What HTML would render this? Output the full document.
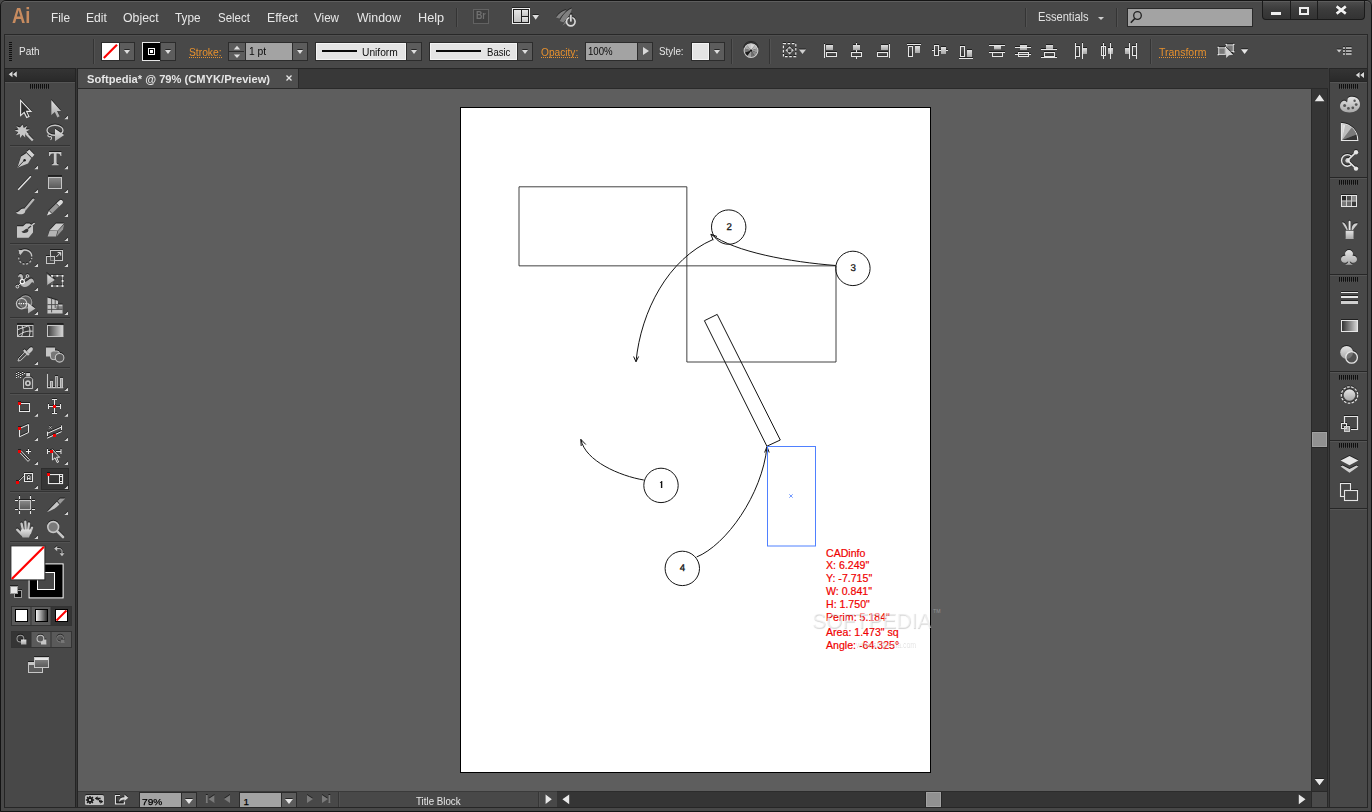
<!DOCTYPE html>
<html><head><meta charset="utf-8"><title>Ai</title>
<style>
*{box-sizing:border-box;margin:0;padding:0}
html,body{width:1372px;height:812px;overflow:hidden;background:#484848;font-family:"Liberation Sans",sans-serif;}
#win{position:absolute;left:0;top:0;width:1372px;height:812px;background:#484848;overflow:hidden}
.a{position:absolute}
.t{position:absolute;white-space:nowrap;line-height:1}
.menu{font-size:12.3px;top:10px;color:#e6e6e6}
.vs{position:absolute;width:2px;border-left:1px solid #343434;border-right:1px solid #525252}
.or{color:#e8912d;font-size:11px;top:46px}
.ul{position:absolute;height:1px;background-image:linear-gradient(90deg,#e8912d 50%,transparent 50%);background-size:2px 1px}
.ctl{font-size:11px;color:#e6e6e6;top:46px}
.dd{position:absolute;background:#5c5c5c;border:1px solid #2c2c2c;width:16px;height:19px;top:42px}
.dd:after{content:"";position:absolute;left:4px;top:7px;border-left:3.5px solid transparent;border-right:3.5px solid transparent;border-top:4.5px solid #dedede;filter:drop-shadow(0px -1px 0px rgba(0,0,0,0.6))}
.box{position:absolute;border:1px solid #2c2c2c;height:19px;top:42px}
.lt{background:#e4e4e4}
.inp{background:#a3a3a3}
.bt{font-size:11px;color:#101010;top:4px}
svg{position:absolute;left:0;top:0;overflow:visible}
.grip{position:absolute;height:5px;width:19px;background-image:linear-gradient(90deg,#0e0e0e 50%,transparent 50%);background-size:2px 5px;border-bottom:1px solid rgba(255,255,255,0.06)}
</style></head><body>
<div id="win">
<div class="a" style="left:0;top:0;width:1372px;height:812px;border:1px solid #141414;border-radius:6px 6px 0 0"></div>
<div class="a" style="left:1px;top:1px;width:1370px;height:12px;border-top:1px solid #5e5e5e;border-radius:5px 5px 0 0"></div>
<!--MENUBAR-->
<div class="t" style="left:12.40px;top:4.77px;font-size:22.6px;color:#c78b5f;font-weight:bold;transform:scaleX(0.8142);transform-origin:0 0;">Ai</div>
<div class="t" style="left:50.70px;top:10.89px;font-size:13px;color:#e8e8e8;transform:scaleX(0.9070);transform-origin:0 0;">File</div><div class="t" style="left:85.90px;top:10.89px;font-size:13px;color:#e8e8e8;transform:scaleX(0.9285);transform-origin:0 0;">Edit</div><div class="t" style="left:122.80px;top:10.89px;font-size:13px;color:#e8e8e8;transform:scaleX(0.9475);transform-origin:0 0;">Object</div><div class="t" style="left:174.90px;top:10.89px;font-size:13px;color:#e8e8e8;transform:scaleX(0.9083);transform-origin:0 0;">Type</div><div class="t" style="left:217.60px;top:10.89px;font-size:13px;color:#e8e8e8;transform:scaleX(0.8829);transform-origin:0 0;">Select</div><div class="t" style="left:266.50px;top:10.89px;font-size:13px;color:#e8e8e8;transform:scaleX(0.9393);transform-origin:0 0;">Effect</div><div class="t" style="left:314.20px;top:10.89px;font-size:13px;color:#e8e8e8;transform:scaleX(0.8946);transform-origin:0 0;">View</div><div class="t" style="left:357.30px;top:10.89px;font-size:13px;color:#e8e8e8;transform:scaleX(0.9473);transform-origin:0 0;">Window</div><div class="t" style="left:417.60px;top:10.89px;font-size:13px;color:#e8e8e8;transform:scaleX(0.9762);transform-origin:0 0;">Help</div>
<div class="vs" style="left:456px;top:8px;height:19px"></div>
<div class="a" style="left:473px;top:9px;width:16px;height:15px;border:1px solid #626262;background:#3f3f3f"></div><div class="t" style="left:476.20px;top:11.46px;font-size:10.2px;color:#707070;font-weight:bold;transform:scaleX(0.8645);transform-origin:0 0;">Br</div>
<svg width="1372" height="40" viewBox="0 0 1372 40" style="filter:drop-shadow(0px -1px 0px rgba(0,0,0,0.5))"><defs><linearGradient id="lg" x1="0" y1="0" x2="0" y2="1"><stop offset="0" stop-color="#e6e6e6"/><stop offset="1" stop-color="#c2c2c2"/></linearGradient></defs><rect x="512.5" y="8.5" width="17" height="15" fill="#1e1e1e" stroke="#ececec"/><rect x="514" y="10" width="7" height="12" fill="url(#lg)"/><rect x="522" y="10" width="6" height="6" fill="url(#lg)"/><rect x="522" y="17" width="6" height="5" fill="url(#lg)"/><path d="M532.4 15h6.6l-3.3 4.8z" fill="#dedede"/><path d="M556 17.6C559 13 563 10.4 566.4 10C565 12.4 561.6 15.6 559.4 18.4Z" fill="#808080"/><path d="M559.8 21C562.4 15 567.6 9.6 572 8.6C571.4 12.6 567.6 18 563.6 22.4Z" fill="#808080"/><path d="M562.4 25.6L565.4 20.4L567.4 22.4Z" fill="#7a7a7a"/><circle cx="570.8" cy="21.6" r="4.3" fill="#484848" stroke="#d8d8d8" stroke-width="1.7"/><rect x="569.3" y="14.2" width="3" height="8" fill="#484848"/><rect x="570" y="14.8" width="1.7" height="6.8" fill="#d8d8d8"/></svg>
<div class="vs" style="left:1025px;top:8px;height:19px"></div>
<div class="t" style="left:1038.00px;top:10.53px;font-size:12.6px;color:#e2e2e2;transform:scaleX(0.8811);transform-origin:0 0;">Essentials</div>
<div class="a" style="left:1098px;top:17px;border-left:3px solid transparent;border-right:3px solid transparent;border-top:3px solid #d0d0d0"></div>
<div class="vs" style="left:1116px;top:8px;height:19px"></div>
<div class="a" style="left:1127px;top:8px;width:126px;height:19px;background:#a3a3a3;border:1px solid #2a2a2a"></div>
<svg width="1372" height="40" viewBox="0 0 1372 40"><circle cx="1137.5" cy="15.5" r="3.8" fill="none" stroke="#222" stroke-width="1.3"/><path d="M1134.8 18.5l-4 4.2" stroke="#222" stroke-width="1.6"/></svg>
<div class="a" style="left:1262px;top:1px;width:103px;height:19px;background:linear-gradient(#4e4e4e,#3c3c3c 45%,#333);border:1px solid #1a1a1a;border-top:none;border-radius:0 0 4px 4px;box-shadow:inset 0 1px 0 #5c5c5c"></div>
<div class="a" style="left:1290px;top:1px;width:1px;height:18px;background:#1c1c1c"></div><div class="a" style="left:1317px;top:1px;width:1px;height:18px;background:#1c1c1c"></div>
<div class="a" style="left:1271px;top:12px;width:10px;height:3px;background:#ededed"></div>
<div class="a" style="left:1299px;top:7px;width:10px;height:8px;border:2px solid #ededed"></div>
<svg width="1372" height="40" viewBox="0 0 1372 40"><path d="M1336.6 6.2l9.2 7.2M1345.8 6.2l-9.2 7.2" stroke="#1a1a1a" stroke-width="4" opacity="0.55"/><path d="M1336.6 6.4l9.2 7.2M1345.8 6.4l-9.2 7.2" stroke="#f2f2f2" stroke-width="2.7"/></svg>
<!--CONTROLBAR-->
<div class="a" style="left:4px;top:34px;width:1364px;height:35px;border:1px solid #282828;border-bottom-color:#262626;background:#484848"></div>
<div class="a" style="left:5px;top:35px;width:1362px;height:1px;background:#505050"></div>
<div class="a" style="left:9px;top:42px;width:3px;height:20px;background-image:linear-gradient(180deg,#101010 50%,transparent 50%);background-size:3px 2px"></div>
<div class="t" style="left:18.50px;top:46.63px;font-size:10px;color:#e6e6e6;transform:scaleX(1.0014);transform-origin:0 0;">Path</div>
<div class="vs" style="left:93px;top:39px;height:25px"></div>
<div class="box" style="left:101px;width:19px;background:#fff"></div><div class="dd" style="left:119px"></div>
<svg width="1372" height="70" viewBox="0 0 1372 70"><path d="M103.8 58L117 44.8" stroke="#f00" stroke-width="2.1"/></svg>
<div class="box" style="left:142px;width:19px;background:#000;border-color:#e8e8e8"></div><div class="dd" style="left:160px"></div>
<div class="a" style="left:148px;top:48px;width:7px;height:7px;border:1px solid #fff;background:#000"></div><div class="a" style="left:150px;top:50px;width:3px;height:3px;background:#fff"></div>
<div class="t" style="left:189.00px;top:47.53px;font-size:10px;color:#e8912d;transform:scaleX(1.0290);transform-origin:0 0;">Stroke:</div><div class="ul" style="left:189px;top:57px;width:33px"></div>
<div class="box" style="left:228px;width:18px;background:#5c5c5c"></div><div class="a" style="left:229px;top:51px;width:15px;height:1px;background:#2c2c2c"></div>
<svg width="1372" height="70" viewBox="0 0 1372 70"><path d="M233.8 49.4L237 45.8L240.2 49.4ZM233.8 54.4L237 58L240.2 54.4Z" fill="#dedede"/></svg>
<div class="box inp" style="left:245px;width:48px"></div><div class="dd" style="left:292px"></div><div class="t" style="left:249.00px;top:46.63px;font-size:10px;color:#0c0c0c;transform:scaleX(1.0312);transform-origin:0 0;">1 pt</div>
<div class="box lt" style="left:315px;width:92px;box-shadow:inset 0 0 0 1px #f4f4f4"><div class="a" style="left:6px;top:7px;width:35px;height:2px;background:#0a0a0a"></div></div><div class="dd" style="left:406px"></div><div class="t" style="left:362.00px;top:48.43px;font-size:10px;color:#0c0c0c;transform:scaleX(1.0227);transform-origin:0 0;">Uniform</div>
<div class="box lt" style="left:429px;width:89px;box-shadow:inset 0 0 0 1px #f4f4f4"><div class="a" style="left:6px;top:7px;width:45px;height:2px;background:#0a0a0a"></div></div><div class="dd" style="left:517px"></div><div class="t" style="left:486.60px;top:48.43px;font-size:10px;color:#0c0c0c;transform:scaleX(0.9569);transform-origin:0 0;">Basic</div>
<div class="t" style="left:540.60px;top:47.53px;font-size:10px;color:#e8912d;transform:scaleX(1.0142);transform-origin:0 0;">Opacity:</div><div class="ul" style="left:541px;top:57px;width:37px"></div>
<div class="box inp" style="left:585px;width:53px"></div><div class="box" style="left:637px;width:16px;background:#5c5c5c"></div><div class="a" style="left:643px;top:47px;border-top:4.5px solid transparent;border-bottom:4.5px solid transparent;border-left:6px solid #dadada"></div><div class="t" style="left:588.20px;top:46.53px;font-size:10px;color:#0c0c0c;transform:scaleX(0.9618);transform-origin:0 0;">100%</div>
<div class="t" style="left:658.80px;top:46.83px;font-size:10px;color:#e6e6e6;transform:scaleX(0.9836);transform-origin:0 0;">Style:</div>
<div class="box lt" style="left:691px;width:19px;box-shadow:inset 0 0 0 1px #f4f4f4"></div><div class="dd" style="left:709px"></div>
<div class="vs" style="left:731px;top:39px;height:25px"></div>
<div class="vs" style="left:769px;top:39px;height:25px"></div>
<div class="vs" style="left:1150px;top:39px;height:25px"></div>
<div class="t" style="left:1158.60px;top:47.53px;font-size:10px;color:#e8912d;transform:scaleX(1.0489);transform-origin:0 0;">Transform</div><div class="ul" style="left:1159px;top:57px;width:47px"></div>
<!--CTRLICONS-->
<svg width="1372" height="812" viewBox="0 0 1372 812" fill="none"><defs><linearGradient id="cg" x1="0" y1="0" x2="0" y2="1"><stop offset="0" stop-color="#e0e0e0"/><stop offset="1" stop-color="#a6a6a6"/></linearGradient><linearGradient id="cd" x1="0" y1="0" x2="0" y2="1"><stop offset="0" stop-color="#5a5a5a"/><stop offset="1" stop-color="#2e2e2e"/></linearGradient><radialGradient id="rg"><stop offset="0" stop-color="#f0f0f0"/><stop offset="0.25" stop-color="#8a8a8a"/><stop offset="1" stop-color="#b8b8b8"/></radialGradient></defs><g style="filter:drop-shadow(0px -1px 0px rgba(0,0,0,0.55))"><path d="M751.0 50.6L751.00 43.70A6.9 6.9 0 0 1 755.06 45.02Z" fill="#d6d6d6"/><path d="M751.0 50.6L755.06 45.02A6.9 6.9 0 0 1 757.56 48.47Z" fill="#b8b8b8"/><path d="M751.0 50.6L757.56 48.47A6.9 6.9 0 0 1 757.56 52.73Z" fill="#9a9a9a"/><path d="M751.0 50.6L757.56 52.73A6.9 6.9 0 0 1 755.06 56.18Z" fill="#8a8a8a"/><path d="M751.0 50.6L755.06 56.18A6.9 6.9 0 0 1 751.00 57.50Z" fill="#6e6e6e"/><path d="M751.0 50.6L751.00 57.50A6.9 6.9 0 0 1 746.94 56.18Z" fill="#9c9c9c"/><path d="M751.0 50.6L746.94 56.18A6.9 6.9 0 0 1 744.44 52.73Z" fill="#1a1a1a"/><path d="M751.0 50.6L744.44 52.73A6.9 6.9 0 0 1 744.44 48.47Z" fill="#7c7c7c"/><path d="M751.0 50.6L744.44 48.47A6.9 6.9 0 0 1 746.94 45.02Z" fill="#a8a8a8"/><path d="M751.0 50.6L746.94 45.02A6.9 6.9 0 0 1 751.00 43.70Z" fill="#c6c6c6"/><circle cx="751.0" cy="50.6" r="6.9" stroke="#cacaca" stroke-width="1.1"/><path d="M743.7 49.1A7.5 7.5 0 0 1 758.3 49.1" stroke="#2a2a2a" stroke-width="0.8" transform="translate(0,-0.9)"/><circle cx="751.0" cy="50.6" r="1.1" fill="#161616"/><rect x="783.4" y="43.6" width="12.4" height="13" stroke="#e6e6e6" stroke-width="1.2" stroke-dasharray="2.6 1.6"/><path d="M789.6 46.2l2.2 2.4h-4.4zM789.6 54.6l2.2-2.4h-4.4zM785.4 50.3l2.4-2.2v4.4zM793.8 50.3l-2.4-2.2v4.4z" fill="#cfcfcf"/><path d="M799 49.6h7l-3.5 4.4z" fill="#cfcfcf"/><rect x="824" y="44" width="1" height="14" fill="#e6e6e6"/><rect x="826" y="45" width="7" height="5" fill="url(#cg)"/><rect x="826.5" y="52.5" width="10" height="4" fill="url(#cd)" stroke="#e6e6e6" stroke-width="1"/><rect x="856" y="43" width="1" height="16" fill="#e6e6e6"/><rect x="853" y="45" width="7" height="5" fill="url(#cg)"/><rect x="851.5" y="52.5" width="10" height="4" fill="url(#cd)" stroke="#e6e6e6" stroke-width="1"/><rect x="889" y="44" width="1" height="14" fill="#e6e6e6"/><rect x="881" y="45" width="7" height="5" fill="url(#cg)"/><rect x="877.5" y="52.5" width="10" height="4" fill="url(#cd)" stroke="#e6e6e6" stroke-width="1"/><rect x="907" y="44" width="14" height="1" fill="#e6e6e6"/><rect x="908.5" y="46.5" width="4" height="10" fill="url(#cd)" stroke="#e6e6e6" stroke-width="1"/><rect x="915" y="46" width="5" height="7" fill="url(#cg)"/><rect x="932" y="50" width="16" height="1" fill="#e6e6e6"/><rect x="934.5" y="45.5" width="4" height="10" fill="url(#cd)" stroke="#e6e6e6" stroke-width="1"/><rect x="941" y="47" width="5" height="7" fill="url(#cg)"/><rect x="960.5" y="46.5" width="4" height="10" fill="url(#cd)" stroke="#e6e6e6" stroke-width="1"/><rect x="967" y="50" width="5" height="7" fill="url(#cg)"/><rect x="959" y="58" width="14" height="1" fill="#e6e6e6"/><rect x="989" y="45" width="16" height="1" fill="#e6e6e6"/><rect x="989" y="52" width="16" height="1" fill="#e6e6e6"/><rect x="994" y="46" width="7" height="3.4" fill="url(#cg)"/><rect x="992.5" y="52.5" width="10" height="4" fill="url(#cd)" stroke="#e6e6e6" stroke-width="1"/><rect x="1020" y="45" width="7" height="5" fill="url(#cg)"/><rect x="1018.5" y="52.5" width="10" height="4" fill="url(#cd)" stroke="#e6e6e6" stroke-width="1"/><rect x="1015" y="47" width="16" height="1" fill="#e6e6e6"/><rect x="1015" y="54" width="16" height="1" fill="#e6e6e6"/><rect x="1046" y="45" width="7" height="4" fill="url(#cg)"/><rect x="1044.5" y="52.5" width="10" height="4" fill="url(#cd)" stroke="#e6e6e6" stroke-width="1"/><rect x="1041" y="49" width="16" height="1" fill="#e6e6e6"/><rect x="1041" y="57" width="16" height="1" fill="#e6e6e6"/><rect x="1075" y="43" width="1" height="16" fill="#e6e6e6"/><rect x="1082" y="43" width="1" height="16" fill="#e6e6e6"/><rect x="1075.5" y="46.5" width="4" height="10" fill="url(#cd)" stroke="#e6e6e6" stroke-width="1"/><rect x="1083" y="48" width="4" height="6" fill="url(#cg)"/><rect x="1101.5" y="46.5" width="4" height="9" fill="url(#cd)" stroke="#e6e6e6" stroke-width="1"/><rect x="1108" y="48" width="5" height="6" fill="url(#cg)"/><rect x="1103" y="43" width="1" height="16" fill="#e6e6e6"/><rect x="1110" y="43" width="1" height="16" fill="#e6e6e6"/><rect x="1125" y="48" width="5" height="6" fill="url(#cg)"/><rect x="1132.5" y="46.5" width="4" height="9" fill="url(#cd)" stroke="#e6e6e6" stroke-width="1"/><rect x="1129" y="43" width="1" height="16" fill="#e6e6e6"/><rect x="1136" y="43" width="1" height="16" fill="#e6e6e6"/><rect x="1218.7" y="47.8" width="6.6" height="6.6" fill="#7a7a7a" stroke="#cfcfcf" stroke-width="1.1"/><rect x="1226.7" y="44.9" width="6.6" height="6.6" fill="#7a7a7a" stroke="#cfcfcf" stroke-width="1.1"/><rect x="1217.6000000000001" y="46.699999999999996" width="1.2" height="1.2" fill="#fff"/><rect x="1225.0" y="46.699999999999996" width="1.2" height="1.2" fill="#fff"/><rect x="1217.6000000000001" y="54.1" width="1.2" height="1.2" fill="#fff"/><rect x="1225.6000000000001" y="43.8" width="1.2" height="1.2" fill="#fff"/><rect x="1233.2" y="43.8" width="1.2" height="1.2" fill="#fff"/><rect x="1233.2" y="51.199999999999996" width="1.2" height="1.2" fill="#fff"/><path d="M1225.8 47.2L1226.2 58L1229 55.2L1233.2 54.8Z" fill="#d2d2d2"/><path d="M1225.8 46.6L1233.4 54" stroke="#1c1c1c" stroke-width="0.9"/><path d="M1241 49.2h7.2l-3.6 4.9z" fill="#e6e6e6"/><path d="M1336.6 49.4h5l-2.5 3z" fill="#cfcfcf"/><path d="M1343 48h2M1346 48h5.6M1343 51h2M1346 51h5.6M1343 54h2M1346 54h5.6" stroke="#cfcfcf" stroke-width="1.4"/></g></svg>
<!--TOOLS-->
<div class="a" style="left:4px;top:68px;width:72px;height:740px;background:#484848;border:1px solid #242424"></div><div class="a" style="left:76px;top:68px;width:1px;height:740px;background:#363636"></div>
<div class="a" style="left:5px;top:69px;width:70px;height:12px;background:linear-gradient(#343434,#2a2a2a)"></div>
<div class="a" style="left:5px;top:81px;width:70px;height:1px;background:#262626"></div><div class="a" style="left:5px;top:82px;width:70px;height:1px;background:#565656"></div>

<div class="grip" style="left:30px;top:84px"></div>
<!--TOOLICONS-->
<svg width="1372" height="812" viewBox="0 0 1372 812" fill="none"><defs><linearGradient id="gv" x1="0" y1="0" x2="0" y2="1"><stop offset="0" stop-color="#8a8a8a"/><stop offset="1" stop-color="#585858"/></linearGradient><linearGradient id="gh" x1="0" y1="0" x2="1" y2="0"><stop offset="0" stop-color="#3c3c3c"/><stop offset="1" stop-color="#dadada"/></linearGradient><linearGradient id="gl" x1="0" y1="0" x2="0" y2="1"><stop offset="0" stop-color="#e2e2e2"/><stop offset="1" stop-color="#a8a8a8"/></linearGradient></defs><rect x="10" y="145" width="60" height="1" fill="#333"/><rect x="10" y="146" width="60" height="1" fill="#525252"/><rect x="10" y="243" width="60" height="1" fill="#333"/><rect x="10" y="244" width="60" height="1" fill="#525252"/><rect x="10" y="317" width="60" height="1" fill="#333"/><rect x="10" y="318" width="60" height="1" fill="#525252"/><rect x="10" y="367" width="60" height="1" fill="#333"/><rect x="10" y="368" width="60" height="1" fill="#525252"/><rect x="10" y="393" width="60" height="1" fill="#333"/><rect x="10" y="394" width="60" height="1" fill="#525252"/><rect x="41.5" y="468.5" width="27" height="21" fill="#363636" stroke="#2c2c2c"/><rect x="10" y="491" width="60" height="1" fill="#333"/><rect x="10" y="492" width="60" height="1" fill="#525252"/><rect x="10" y="541" width="60" height="1" fill="#333"/><rect x="10" y="542" width="60" height="1" fill="#525252"/><rect x="29.1" y="563.9" width="34" height="34" fill="#000" stroke="#fff"/><rect x="37.5" y="572.5" width="17" height="17" fill="#484848" stroke="#fff"/><rect x="10.9" y="545.9" width="34" height="34" fill="#fff" stroke="#2a2a2a"/><path d="M11.8 579L44 546.8" stroke="#f00" stroke-width="2.2"/><rect x="11.5" y="606.5" width="60" height="19" fill="#5a5a5a" stroke="#333"/><rect x="51" y="607" width="20" height="18" fill="#353535"/><path d="M31 607V625M51 607V625" stroke="#333"/><rect x="15.5" y="609.5" width="12" height="12" fill="#fff" stroke="#000"/><rect x="35.5" y="609.5" width="12" height="12" fill="url(#gw)" stroke="#000"/><rect x="55.5" y="609.5" width="12" height="12" fill="#fff" stroke="#000"/><path d="M56.5 620.5L66.5 610.5" stroke="#f00" stroke-width="2"/><defs><linearGradient id="gw" x1="0" y1="0" x2="1" y2="0"><stop offset="0" stop-color="#fff"/><stop offset="1" stop-color="#222"/></linearGradient></defs><rect x="11.5" y="631.5" width="60" height="16" fill="#5a5a5a" stroke="#333"/><rect x="12" y="632" width="19" height="15" fill="#353535"/><path d="M31 632V647M51 632V647" stroke="#333"/><g style="filter:drop-shadow(0px -1px 0px rgba(0,0,0,0.55))"><path d="M12.5 71.2v6l-3.8-3zM16.8 71.2v6l-3.8-3z" fill="#d8d8d8"/><path d="M20.6 100.3V115.6L24.2 112.4L26.7 117.6L29 116.5L26.6 111.4H31Z" fill="#2e2e2e" stroke="#e8e8e8" stroke-width="1.1" stroke-linejoin="miter"/><path d="M51.3 100V115L54.8 111.9L57.4 117.4L59.6 116.3L57.1 111H61Z" fill="url(#gl)"/><path d="M68 115.60000000000001V119.2H64.4Z" fill="#d6d6d6"/><path d="M22.5 124.5l1.3 3.6 3.2-2.4-1.2 3.6 4 .2-3.4 2 2.6 2.8-3.9-.6.1 3.9-2.7-2.9-2.4 3.2-.3-3.9-3.8 1.2 2.3-3.2-3.6-1.4 3.8-1-2.2-3.3 3.7 1.2z" fill="#c6c6c6"/><path d="M26 133.5l6.8 7" stroke="#c6c6c6" stroke-width="2.2"/><ellipse cx="55" cy="130.3" rx="8" ry="5" stroke="#c6c6c6" stroke-width="1.4"/><path d="M48.5 134.5c-1.5 1.2 0 2.6 1.6 2.2c1.6-.4 2 1.6.4 3.2" stroke="#c6c6c6" stroke-width="1.2"/><path d="M55 128.7V141.2L64.2 135Z" fill="url(#gl)"/><g transform="translate(0,0.9)"><path d="M17.3 166.8L21 155.5L26.5 152.2L31.3 157L28 162.7Z" fill="#c6c6c6"/><path d="M17.6 166.4L24.3 159.6" stroke="#2e2e2e" stroke-width="0.9"/><circle cx="24.6" cy="159.4" r="1.2" fill="#1e1e1e"/><path d="M26.4 151.2L29.4 148.6L34.4 153.8L32 156.6Z" fill="#d2d2d2"/><path d="M27.4 152.6L31 156.2" stroke="#484848" stroke-width="0.9"/></g><path d="M38 165.6V169.2H34.4Z" fill="#d6d6d6"/><path d="M49 152H61.4V156H60.5C60.3 154.3 59.5 153.4 57.9 153.4H56.6V162.6C56.6 163.8 57.2 164.3 58.6 164.4V165.3H51.8V164.4C53.2 164.3 53.8 163.8 53.8 162.6V153.4H52.5C50.9 153.4 50.1 154.3 49.9 156H49Z" fill="#c6c6c6"/><path d="M68 165.6V169.2H64.4Z" fill="#d6d6d6"/><path d="M18.2 189.7L30.8 176.3" stroke="#e8e8e8" stroke-width="1.3"/><path d="M38 189.4V193H34.4Z" fill="#d6d6d6"/><rect x="48" y="176" width="14" height="1" fill="#2a2a2a"/><rect x="48.5" y="177.5" width="13" height="11" fill="url(#gv)" stroke="#c6c6c6"/><path d="M68 189.4V193H64.4Z" fill="#d6d6d6"/><path d="M33.4 199.6L25 209.6" stroke="#b6b6b6" stroke-width="2.3" stroke-linecap="round"/><path d="M15.8 212.4C19.4 212.2 20.2 208.2 23.6 208.4C26 209.2 25.8 212.6 23.4 213.8C20.6 215 17.4 214 15.8 212.4Z" fill="#c6c6c6"/><g transform="translate(46.9,215.4) rotate(-44)"><path d="M0 0L5 -2.1V2.1Z" fill="#dcdcdc"/><rect x="5" y="-2.1" width="10" height="4.2" fill="#989898"/><path d="M15 -2.1H19.4A2.1 2.1 0 0 1 19.4 2.1H15Z" fill="#d8d8d8"/><path d="M5 -2.1V2.1M15 -2.1V2.1" stroke="#3a3a3a" stroke-width="0.7"/></g><path d="M68 213.4V217H64.4Z" fill="#d6d6d6"/><path d="M17 226.3H23L26 223.5H29.5L33 226V232.5L28.6 237.8H17Z" fill="#c6c6c6"/><path d="M21.5 231.5C24 231.5 25 228.8 27.6 228.5C29 229.4 28.6 231.6 26.8 232.6C24.6 233.6 22.6 233 21.5 231.5Z" fill="#3a3a3a"/><path d="M28 228.6L34.6 223" stroke="#c6c6c6" stroke-width="1.6"/><path d="M28 228.6L31 226" stroke="#3a3a3a" stroke-width="1.3"/><path d="M49.6 230.2L56 223.6H64L57.8 230.4Z" fill="#cdcdcd"/><path d="M49.6 230.6H57.6L56 236.6H47.6Z" fill="#b4b4b4"/><path d="M58.2 230.6L64.2 224.2L63 229.6L56.6 236.6Z" fill="#959595"/><path d="M68 237.4V241H64.4Z" fill="#d6d6d6"/><path d="M19.4 253.6A6.5 6.5 0 0 1 31.7 256.6" stroke="#c6c6c6" stroke-width="1.4"/><path d="M18.7 257.4A6.5 6.5 0 0 0 31.7 257.8" stroke="#b4b4b4" stroke-width="1.3" stroke-dasharray="2.1 1.6"/><path d="M18.4 249.8L24 250.6L20.2 255.2Z" fill="#c6c6c6"/><path d="M38 263.4V267H34.4Z" fill="#d6d6d6"/><rect x="50.5" y="250.5" width="12" height="10" fill="#3e3e3e" stroke="#c6c6c6"/><rect x="46.5" y="256.5" width="8" height="7" fill="#5a5a5a" fill-opacity="0.6" stroke="#c6c6c6"/><path d="M56.3 257L60.3 253M57.6 252.6H60.7V255.7" stroke="#e8e8e8" stroke-width="1"/><path d="M68 263.4V267H64.4Z" fill="#d6d6d6"/><path d="M18 277.6C18 274.6 20.4 273.2 22 274.6C23.8 276.2 22.6 279.6 23.6 281.2C24.8 283 27 280.8 29.2 279.2C31.8 277.6 34.2 279.4 34.2 283.8C33.2 281.8 31.8 282 30.6 283.8C28.2 287.4 23.4 288 21 285.2C18.8 282.6 21.4 278.6 20.4 277.2C19.6 276.4 18.6 276.6 18 277.6Z" fill="#b8b8b8"/><path d="M17.6 286.4L27.4 276.2" stroke="#e8e8e8" stroke-width="1"/><circle cx="17.4" cy="286.6" r="1.4" fill="#484848" stroke="#e8e8e8" stroke-width="0.9"/><circle cx="27.5" cy="276" r="1.4" fill="#484848" stroke="#e8e8e8" stroke-width="0.9"/><circle cx="22.3" cy="281.6" r="2.1" fill="#484848" stroke="#fff" stroke-width="1.1"/><path d="M38 287.4V291H34.4Z" fill="#d6d6d6"/><rect x="52" y="275.8" width="10.6" height="10.2" stroke="#b0b0b0" stroke-width="0.8"/><rect x="51.1" y="274.90000000000003" width="1.8" height="1.8" fill="#f2f2f2"/><rect x="51.1" y="280.0" width="1.8" height="1.8" fill="#f2f2f2"/><rect x="51.1" y="285.1" width="1.8" height="1.8" fill="#f2f2f2"/><rect x="56.4" y="274.90000000000003" width="1.8" height="1.8" fill="#f2f2f2"/><rect x="56.4" y="285.1" width="1.8" height="1.8" fill="#f2f2f2"/><rect x="61.7" y="274.90000000000003" width="1.8" height="1.8" fill="#f2f2f2"/><rect x="61.7" y="280.0" width="1.8" height="1.8" fill="#f2f2f2"/><rect x="61.7" y="285.1" width="1.8" height="1.8" fill="#f2f2f2"/><path d="M46.8 273.6V285.8L55.4 280Z" fill="url(#gl)" stroke="#484848" stroke-width="0.8"/><circle cx="25.6" cy="302" r="6.2" fill="#5c5c5c" stroke="#9a9a9a" stroke-width="1.2"/><circle cx="21.6" cy="303.6" r="5.2" fill="#6a6a6a" fill-opacity="0.5" stroke="#c6c6c6" stroke-width="1.2"/><path d="M18.4 303.6H28" stroke="#fff" stroke-width="1.2" stroke-dasharray="1.2 1.1"/><path d="M28 303V313.4L35.4 308.6Z" fill="url(#gl)"/><path d="M38 311.4V315H34.4Z" fill="#d6d6d6"/><path d="M47.4 297.4L58 300.8V304.6H62.6V313.4H47.4Z" fill="#c6c6c6"/><path d="M47.4 304.6H58M51.6 298.6V312.4M55.2 299.8V308M47.4 309.4H62.6M58 304.6V309.4" stroke="#4a4a4a" stroke-width="0.9"/><path d="M56.2 306.2h6.4v3.2H56.2z" fill="#4a4a4a" opacity="0.55"/><path d="M68 311.4V315H64.4Z" fill="#d6d6d6"/><rect x="17" y="324" width="16.5" height="1" fill="#2a2a2a"/><rect x="17.5" y="325.5" width="15.5" height="11" fill="#3a3a3a" stroke="#c6c6c6"/><path d="M18 335.6C22.5 332.6 26 330.6 32.6 331.2M21.6 336.4C23.4 332 23.6 328.6 22 325.8M18 329.6C22 327.8 25 327.2 28.2 325.8M28.6 325.8C30.6 329.4 30.2 333 29.2 336.4" stroke="#e8e8e8" stroke-width="0.9"/><rect x="47" y="324" width="16.5" height="1" fill="#2a2a2a"/><rect x="47.5" y="325.5" width="15.5" height="11" fill="url(#gh)" stroke="#c6c6c6"/><path d="M18 361L18.7 358.5L25 351.7L27.3 354L20.6 360.5Z" fill="#4a4a4a" stroke="#c6c6c6" stroke-width="1"/><path d="M23.8 350L28.8 355" stroke="#c6c6c6" stroke-width="2.3"/><path d="M26.6 351L29 348.4C30 347.2 31.8 346.9 32.5 347.7C33.3 348.5 32.8 350.2 31.8 351.2L29.2 353.8Z" fill="#c6c6c6"/><path d="M38 361.4V365H34.4Z" fill="#d6d6d6"/><rect x="46" y="347.5" width="9" height="9" fill="#c6c6c6"/><rect x="50.5" y="351" width="9" height="8.6" rx="2.6" fill="#777" stroke="#c6c6c6" stroke-width="1"/><circle cx="59.6" cy="357.8" r="4.3" fill="#5a5a5a" stroke="#c6c6c6" stroke-width="1.1"/><path d="M23.5 379.2L25 377.3H31L32.6 379.2V388.5H23.5Z" fill="#4c4c4c" stroke="#c6c6c6" stroke-width="1"/><rect x="25.4" y="380.4" width="5.2" height="6.8" fill="#3c3c3c"/><rect x="26.2" y="373" width="3.8" height="3.4" fill="#c6c6c6"/><circle cx="27.9" cy="383.3" r="2.1" fill="none" stroke="#c6c6c6" stroke-width="1.7"/><path d="M18 372h1.1v1.1h-1.1zM22 372h1.1v1.1h-1.1zM16 373h1.1v1.1h-1.1zM20 373h1.1v1.1h-1.1zM24 373h1.1v1.1h-1.1zM18 374h1.1v1.1h-1.1zM22 374h1.1v1.1h-1.1zM16 375h1.1v1.1h-1.1zM20 375h1.1v1.1h-1.1zM18 376.2h1.1v1.1h-1.1zM16 377h1.1v1.1h-1.1zM20 377h1.1v1.1h-1.1z" fill="#e4e4e4"/><path d="M38 387.4V391H34.4Z" fill="#d6d6d6"/><path d="M47.5 373.8V387.6H63.2" stroke="#c6c6c6" stroke-width="1.1"/><rect x="50" y="380.8" width="3" height="6.6" fill="#c6c6c6"/><rect x="51" y="381.8" width="1" height="5.6" fill="#8c8c8c"/><rect x="55" y="376" width="3" height="11.4" fill="#b0b0b0"/><rect x="56" y="377" width="1" height="10.4" fill="#7a7a7a"/><rect x="60" y="377.9" width="3" height="9.5" fill="#c6c6c6"/><rect x="61" y="378.9" width="1" height="8.5" fill="#9a9a9a"/><path d="M68 387.4V391H64.4Z" fill="#d6d6d6"/><rect x="19.5" y="403.5" width="10" height="8" stroke="#e8e8e8" stroke-width="1"/><rect x="18" y="402" width="3" height="3" fill="#f40000"/><path d="M38 413.2V416.8H34.4Z" fill="#d6d6d6"/><path d="M54.5 399.5V413.5M52 399.5H57M52 413.5H57M48.5 406.5H60.5M48.5 404V409M60.5 404V409" stroke="#e8e8e8" stroke-width="1"/><rect x="53" y="405" width="3" height="3" fill="#f40000"/><path d="M68 413.2V416.8H64.4Z" fill="#d6d6d6"/><path d="M19.5 428.5L28.5 424.5V432.5L19.5 436.8Z" stroke="#e8e8e8" stroke-width="1"/><rect x="18" y="427" width="3" height="3" fill="#f40000"/><path d="M38 437.4V441H34.4Z" fill="#d6d6d6"/><path d="M47.2 433.4L61.6 427M47.2 438.2L61.6 431.6M47.5 431.6V436M61.5 425.4V430" stroke="#e8e8e8" stroke-width="1"/><path d="M49.2 426.2l2.4 2.4M51.6 426.2l-2.4 2.4" stroke="#c6c6c6" stroke-width="0.8"/><rect x="53" y="434" width="3" height="3" fill="#f40000"/><path d="M68 437.4V441H64.4Z" fill="#d6d6d6"/><path d="M19.4 452L28 461.4L29.6 459.8L21 450.6Z" stroke="#e8e8e8" stroke-width="0.9"/><rect x="18" y="450" width="3" height="3" fill="#f40000"/><path d="M26 451.5H31M28.5 449V454" stroke="#e8e8e8" stroke-width="1"/><path d="M38 461.4V465H34.4Z" fill="#d6d6d6"/><path d="M47.5 449V454M47.5 451.5H50M61 449V454M56 451.5H61" stroke="#e8e8e8" stroke-width="1"/><path d="M52.4 449.6V460L55 457.8L57.2 462.6L58.6 461.9L56.6 457.2H59.6Z" fill="#484848" stroke="#e8e8e8" stroke-width="1"/><rect x="50" y="450" width="3" height="3" fill="#f40000"/><path d="M68 461.4V465H64.4Z" fill="#d6d6d6"/><rect x="24.5" y="473.5" width="8" height="8" stroke="#e8e8e8" stroke-width="1"/><path d="M27.5 480V476.4L28.2 475.5H29.3L30 476.4V480M27.5 478.5H30" stroke="#e8e8e8" stroke-width="0.9"/><path d="M18 482L24 476" stroke="#c6c6c6" stroke-width="0.9"/><rect x="16" y="481" width="3" height="3" fill="#f40000"/><path d="M38 485.4V489H34.4Z" fill="#d6d6d6"/><rect x="48.5" y="474.5" width="14" height="9" stroke="#e8e8e8" stroke-width="1.2"/><path d="M59.5 474.5V483.5M59.5 476.5H62.5M59.5 481.5H62.5" stroke="#e8e8e8" stroke-width="1"/><rect x="47" y="473" width="3" height="3" fill="#f40000"/><path d="M68 485.4V489H64.4Z" fill="#d6d6d6"/><rect x="19.5" y="500.5" width="11" height="9" fill="url(#gv)" stroke="#c6c6c6"/><path d="M19.5 496V499M30.5 496V499M19.5 511V514M30.5 511V514M15 500.5H18M15 509.5H18M32 500.5H35M32 509.5H35" stroke="#e8e8e8" stroke-width="1.1"/><path d="M47 512L57 501.6L59.4 504.4C56 508 51.6 510.6 47 512Z" fill="#c6c6c6"/><path d="M57.6 501L60 498.6H65.2L60 504Z" fill="#9a9a9a"/><path d="M68 511.4V515H64.4Z" fill="#d6d6d6"/><g stroke="#c6c6c6" stroke-width="2.3" stroke-linecap="round"><path d="M21.5 523.6L23.2 531"/><path d="M25.3 521.6L25.7 530"/><path d="M29 523.4L28 531"/><path d="M32 527.6L30 533"/><path d="M17.2 529.6L21.8 534.4"/></g><path d="M21 529.6H31L30.6 533.6L29 537.4H22.6L20.4 533.2Z" fill="url(#gl)"/><path d="M38 535.4V539H34.4Z" fill="#d6d6d6"/><circle cx="53.2" cy="527" r="5.4" fill="#7a7a7a" stroke="#c6c6c6" stroke-width="1.6"/><path d="M57.4 531.4L63 537" stroke="#c6c6c6" stroke-width="2.6" stroke-linecap="round"/><path d="M57 548.6H59.2C61 548.6 62 549.8 62 551.4V553.4" stroke="#c6c6c6" stroke-width="1"/><path d="M54.2 548.6L57.2 546V551.2Z M62 556.2L59.6 553.2H64.4Z" fill="#c6c6c6"/><rect x="14.5" y="590.5" width="7" height="7" fill="#111" stroke="#9a9a9a"/><rect x="10.5" y="586.5" width="7" height="7" fill="#e6e6e6" stroke="#9a9a9a"/><circle cx="20.4" cy="638.6" r="3.4" stroke="#9a9a9a" stroke-width="1.1"/><rect x="21" y="639.5" width="5.4" height="5" fill="url(#gl)"/><rect x="41" y="639.5" width="5.4" height="5" fill="#c6c6c6"/><circle cx="40.4" cy="638.6" r="3.4" fill="#5a5a5a" stroke="#c6c6c6" stroke-width="1.1"/><path d="M63.6 639.2A3.4 3.4 0 1 0 60.6 642" stroke="#787878" stroke-width="1.1"/><rect x="61" y="639.5" width="3.6" height="3.4" fill="#787878"/><rect x="28.5" y="662.5" width="14" height="10" fill="#5c5c5c" stroke="#c6c6c6"/><rect x="29" y="663" width="13" height="2" fill="#c6c6c6"/><rect x="34.5" y="657.5" width="14" height="10" fill="url(#gv)" stroke="#c6c6c6"/><rect x="35" y="658" width="13" height="2" fill="#e8e8e8"/></g></svg>
<!--DOC-->
<div class="a" style="left:77px;top:69px;width:1251px;height:20px;background:#383838"></div><div class="a" style="left:77px;top:68px;width:1px;height:740px;background:#242424"></div>
<div class="a" style="left:78px;top:69px;width:221px;height:19px;background:#4e4e4e;border-right:1px solid #2a2a2a"></div>
<div class="a" style="left:77px;top:88px;width:1251px;height:1px;background:#2a2a2a"></div>
<div class="t" style="left:87.10px;top:74.49px;font-size:11px;color:#e6e6e6;font-weight:bold;transform:scaleX(1.0130);transform-origin:0 0;">Softpedia* @ 79% (CMYK/Preview)</div>
<svg width="1372" height="100" viewBox="0 0 1372 100"><path d="M286.5 75.5l5 5M291.5 75.5l-5 5" stroke="#e6e6e6" stroke-width="1.3"/></svg>
<div class="a" style="left:78px;top:89px;width:1233px;height:702px;background:#5e5e5e"></div>
<!--ARTBOARD-->
<div class="a" style="left:460px;top:107px;width:471px;height:666px;background:#fff;border:1px solid #000"></div>
<svg width="1372" height="812" viewBox="0 0 1372 812" fill="none"><path d="M519 186.8H686.85V265.85H519Z M686.85 265.85H836V362H686.85Z" stroke="#2c2c2c" stroke-width="0.9"/><circle cx="728.7" cy="227.1" r="17.2" stroke="#141414" stroke-width="1"/><circle cx="852.9" cy="268.4" r="17.2" stroke="#141414" stroke-width="1"/><circle cx="661.0" cy="485.4" r="17.2" stroke="#141414" stroke-width="1"/><circle cx="682.3" cy="568.4" r="17.2" stroke="#141414" stroke-width="1"/><g stroke="#141414" stroke-width="1" stroke-linejoin="miter"><path d="M835.7 265.5C790 262 735 252 711 234.3"/><path d="M713.2 240.2L710.8 234.2L717 236.5"/><path d="M713 239.5C668 259 641 311 636 361.5"/><path d="M633.6 356.5L636 361.8L638.6 356.5"/><path d="M643.8 480C620 476 585 461 581 439.5"/><path d="M581.2 446L580.8 439.3L585.8 444.5"/><path d="M696.6 557C726 545 762 495 767 446.8"/><path d="M764.6 452.5L767 446.6L769.2 452.5"/><path d="M704.4 320.7L717.2 314.4L780.3 440L766.9 446.2Z"/></g><rect x="767.5" y="446.5" width="48" height="99.5" stroke="#4f80ff" stroke-width="1"/><path d="M789.3 494.3l3.4 3.4M792.7 494.3l-3.4 3.4" stroke="#4f80ff" stroke-width="0.8"/></svg>
<svg width="1372" height="812" viewBox="0 0 1372 812" style="text-rendering:geometricPrecision"><text x="729.1" y="229.9" text-anchor="middle" font-family="Liberation Sans, sans-serif" font-size="9.7" fill="#111" stroke="#111" stroke-width="0.28">2</text><text x="853.2" y="271.4" text-anchor="middle" font-family="Liberation Sans, sans-serif" font-size="9.7" fill="#111" stroke="#111" stroke-width="0.28">3</text><text x="682.5" y="571.3" text-anchor="middle" font-family="Liberation Sans, sans-serif" font-size="9.7" fill="#111" stroke="#111" stroke-width="0.28">4</text><path d="M659.7 482.9L661.5 481H662.3V488H660.9V482.9Z" fill="#111"/></svg>
<div class="t" style="left:826px;top:548.3px;font-size:10.6px;color:#f00000;-webkit-text-stroke:0.2px #f00000">CADinfo</div><div class="t" style="left:826px;top:560.4px;font-size:10.6px;color:#f00000;-webkit-text-stroke:0.2px #f00000">X: 6.249"</div><div class="t" style="left:826px;top:573.4px;font-size:10.6px;color:#f00000;-webkit-text-stroke:0.2px #f00000">Y: -7.715"</div><div class="t" style="left:826px;top:586.4px;font-size:10.6px;color:#f00000;-webkit-text-stroke:0.2px #f00000">W: 0.841"</div><div class="t" style="left:826px;top:599.3px;font-size:10.6px;color:#f00000;-webkit-text-stroke:0.2px #f00000">H: 1.750"</div><div class="t" style="left:826px;top:611.9px;font-size:10.6px;color:#f00000;-webkit-text-stroke:0.2px #f00000">Perim: 5.184"</div><div class="t" style="left:826px;top:627.3px;font-size:10.6px;color:#f00000;-webkit-text-stroke:0.2px #f00000">Area: 1.473" sq</div><div class="t" style="left:826px;top:640.4px;font-size:10.6px;color:#f00000;-webkit-text-stroke:0.2px #f00000">Angle: -64.325°</div>
<div class="t" style="left:811.60px;top:609.94px;font-size:21.8px;color:rgba(255,255,255,0.55);transform:scaleX(0.9664);transform-origin:0 0;text-shadow:0.5px 0.8px 0.9px rgba(0,0,0,0.17);">SOFTPEDIA</div><div class="t" style="left:933.00px;top:608.80px;font-size:5.2px;color:rgba(200,200,200,0.5);">TM</div><div class="t" style="left:856.00px;top:640.09px;font-size:8.4px;color:rgba(255,255,255,0.5);transform:scaleX(0.8291);transform-origin:0 0;text-shadow:0.4px 0.5px 0.6px rgba(0,0,0,0.14);">www.softpedia.com</div>
<div class="a" style="left:1311px;top:89px;width:17px;height:702px;background:#353535;border-left:1px solid #292929;border-right:1px solid #292929"></div>
<div class="a" style="left:1312px;top:431px;width:15px;height:17px;background:#262626"></div><div class="a" style="left:1312px;top:432px;width:15px;height:15px;background:#919191;border:1px solid #a2a2a2"></div>
<div class="a" style="left:1328px;top:68px;width:2px;height:740px;background:#282828;border-left:1px solid #3a3a3a"></div>
<!--STATUS-->
<div class="a" style="left:78px;top:791px;width:1250px;height:16px;background:#484848;border-top:1px solid #3a3a3a"></div>
<div class="a" style="left:557px;top:791px;width:754px;height:16px;background:#353535;border-top:1px solid #2c2c2c"></div>
<div class="a" style="left:1311px;top:791px;width:17px;height:16px;background:#4a4a4a;border-left:1px solid #292929;border-top:1px solid #292929;border-right:1px solid #292929"></div>
<div class="a" style="left:925px;top:792px;width:17px;height:15px;background:#262626"></div><div class="a" style="left:926px;top:792px;width:15px;height:15px;background:#919191;border:1px solid #a2a2a2"></div>
<div class="a" style="left:139px;top:792px;width:43px;height:16px;background:#a3a3a3;border:1px solid #2c2c2c"></div>
<div class="a" style="left:181px;top:792px;width:16px;height:16px;background:#5c5c5c;border:1px solid #2c2c2c"></div><div class="a" style="left:185px;top:799px;border-left:4px solid transparent;border-right:4px solid transparent;border-top:5px solid #e4e4e4;filter:drop-shadow(0 -1px 0 rgba(0,0,0,.6))"></div>
<div class="a" style="left:239px;top:792px;width:43px;height:16px;background:#a3a3a3;border:1px solid #2c2c2c"></div>
<div class="a" style="left:281px;top:792px;width:16px;height:16px;background:#5c5c5c;border:1px solid #2c2c2c"></div><div class="a" style="left:285px;top:799px;border-left:4px solid transparent;border-right:4px solid transparent;border-top:5px solid #e4e4e4;filter:drop-shadow(0 -1px 0 rgba(0,0,0,.6))"></div>
<div class="a" style="left:338px;top:792px;width:2px;height:15px;border-left:1px solid #363636;border-right:1px solid #505050"></div><div class="a" style="left:538px;top:792px;width:2px;height:15px;border-left:1px solid #363636;border-right:1px solid #505050"></div>
<div class="t" style="left:142.00px;top:796.50px;font-size:9.8px;color:#000;transform:scaleX(1.0400);transform-origin:0 0;-webkit-text-stroke:0.25px #000;">79%</div><div class="t" style="left:243.60px;top:796.50px;font-size:9.8px;color:#000;-webkit-text-stroke:0.25px #000;">1</div><div class="t" style="left:415.80px;top:796.11px;font-size:10.5px;color:#e6e6e6;transform:scaleX(0.9284);transform-origin:0 0;">Title Block</div>
<div class="a" style="left:4px;top:807px;width:1364px;height:1px;background:#262626"></div>
<svg width="1372" height="812" viewBox="0 0 1372 812"><path d="M1314.8 101.2L1319.6 94.5L1324.4 101.2Z M1314.7 778.9L1319.5 785.3L1324.3 778.9Z M569.2 794.4V804.2L562.4 799.3Z M1298.8 794.4V804.2L1305.5 799.3Z M545.6 794.6V804L551.8 799.3Z" fill="#e8e8e8"/><rect x="1315" y="778" width="9" height="1" fill="#1e1e1e"/></svg>
<!--STATUSICONS-->
<svg width="1372" height="812" viewBox="0 0 1372 812" fill="none"><g style="filter:drop-shadow(0px -1px 0px rgba(0,0,0,0.55))"><rect x="85" y="795" width="19" height="10" rx="1.6" fill="#bdbdbd"/><path d="M90 800L94.10 800.00 M90 800L92.90 802.90 M90 800L90.00 804.10 M90 800L87.10 802.90 M90 800L85.90 800.00 M90 800L87.10 797.10 M90 800L90.00 795.90 M90 800L92.90 797.10" stroke="#1a1a1a" stroke-width="1.5"/><circle cx="90" cy="800" r="2.8" fill="#1a1a1a"/><circle cx="90" cy="800" r="1.1" fill="#d8d8d8"/><path d="M95.4 798.4H100.6M99 801.6H102.6" stroke="#1a1a1a" stroke-width="1.2"/><path d="M95 798.4L97.6 796.2V800.6ZM103 801.6L100.4 799.4V803.8Z" fill="#1a1a1a"/><path d="M97.4 798.6L100.6 801.4" stroke="#1a1a1a" stroke-width="1.1"/><path d="M120 795.6H115.6V803.9H124.4V801.4" stroke="#dedede" stroke-width="1.3"/><path d="M116.4 796.6H120M116.6 796.4V803M116.4 802.9H123.6" stroke="#1e1e1e" stroke-width="0.8"/><path d="M119 802C119.2 798.6 121.2 797.2 124.4 797.2V794.6L128.3 797.8L124.4 801V799.4C121.8 799.4 120.2 800.2 119 802Z" fill="#d6d6d6"/><path d="M206.8 795v8" stroke="#7a7a7a" stroke-width="1.9"/><path d="M214.5 795v8l-6-4z" fill="#7a7a7a"/><path d="M230 795v8l-6-4z" fill="#7a7a7a"/><path d="M307 795v8l6-4z" fill="#7a7a7a"/><path d="M322 795v8l6-4z" fill="#7a7a7a"/><path d="M329.4 795v8" stroke="#7a7a7a" stroke-width="1.9"/></g></svg>
<!--DOCK-->
<div class="a" style="left:1330px;top:69px;width:38px;height:739px;background:#484848;border-right:1px solid #262626;border-bottom:1px solid #262626"></div>
<div class="a" style="left:1330px;top:69px;width:37px;height:12px;background:linear-gradient(#343434,#2a2a2a)"></div>
<!--DOCKICONS-->
<div class="a" style="left:1330px;top:81px;width:37px;height:1px;background:#262626"></div><div class="a" style="left:1330px;top:82px;width:37px;height:1px;background:#555"></div><div class="grip" style="left:1339px;top:84px"></div><div class="a" style="left:1330px;top:177px;width:37px;height:1px;background:#262626"></div><div class="a" style="left:1330px;top:178px;width:37px;height:1px;background:#555"></div><div class="grip" style="left:1339px;top:180px"></div><div class="a" style="left:1330px;top:274px;width:37px;height:1px;background:#262626"></div><div class="a" style="left:1330px;top:275px;width:37px;height:1px;background:#555"></div><div class="grip" style="left:1339px;top:277px"></div><div class="a" style="left:1330px;top:371px;width:37px;height:1px;background:#262626"></div><div class="a" style="left:1330px;top:372px;width:37px;height:1px;background:#555"></div><div class="grip" style="left:1339px;top:375px"></div><div class="a" style="left:1330px;top:440px;width:37px;height:1px;background:#262626"></div><div class="a" style="left:1330px;top:441px;width:37px;height:1px;background:#555"></div><div class="grip" style="left:1339px;top:443px"></div><div class="a" style="left:1330px;top:508px;width:37px;height:1px;background:#262626"></div><div class="a" style="left:1330px;top:509px;width:37px;height:1px;background:#555"></div><svg width="1372" height="812" viewBox="0 0 1372 812" fill="none"><defs><linearGradient id="dg" x1="0" y1="0" x2="0" y2="1"><stop offset="0" stop-color="#e4e4e4"/><stop offset="1" stop-color="#a8a8a8"/></linearGradient><linearGradient id="dh" x1="0" y1="0" x2="1" y2="0"><stop offset="0" stop-color="#2e2e2e"/><stop offset="1" stop-color="#d8d8d8"/></linearGradient></defs><g style="filter:drop-shadow(0px -1px 0px rgba(0,0,0,0.55))"><path d="M1359.6 72v6l-3.8-3zM1364 72v6l-3.8-3z" fill="#d8d8d8"/><path d="M1340 106C1340 103.6 1341.2 101.8 1343 101C1344.6 100.4 1346.4 101.2 1347 102.4C1347.6 101 1347.2 99.4 1347.8 98.2C1349.6 96.6 1353.6 96.4 1356.4 97.8C1359 99.2 1360.2 102 1360 105C1359.6 109.6 1355 112.4 1349.6 112.4C1344 112.4 1340 110.2 1340 106Z" fill="url(#dg)"/><circle cx="1344.6" cy="105.6" r="1.5" fill="#555"/><circle cx="1348.4" cy="108.4" r="1.4" fill="#555"/><circle cx="1352.8" cy="107.8" r="1.4" fill="#555"/><circle cx="1356.2" cy="104.6" r="1.4" fill="#555"/><circle cx="1354.6" cy="100.8" r="1.2" fill="#555"/><path d="M1341.5 123.5C1351 124 1357.5 131 1357.8 140.5H1341.5Z" fill="#9a9a9a" stroke="#e6e6e6" stroke-width="1.2"/><path d="M1342.2 140L1345.5 124.6C1348 125.2 1350 126.2 1351.8 127.6Z" fill="#bdbdbd"/><path d="M1342.2 140L1351.8 127.6C1354 129.4 1355.6 131.8 1356.4 134.6Z" fill="#7a7a7a"/><path d="M1342.2 140L1356.4 134.6C1356.9 136.4 1357.1 138 1357.2 140Z" fill="#333"/><path d="M1342.2 124.2V140L1345.5 124.6Z" fill="#e0e0e0"/><path d="M1351.4 156.2A5.8 5.8 0 1 0 1351.4 164.6" stroke="#e6e6e6" stroke-width="1.4"/><circle cx="1347.6" cy="160.4" r="2.3" fill="#cfcfcf"/><path d="M1347.6 160.4L1355.8 152.4M1347.6 160.4L1355.8 168.4" stroke="#e6e6e6" stroke-width="1.5"/><circle cx="1356" cy="152.2" r="2.2" fill="#e6e6e6"/><circle cx="1356" cy="168.6" r="2.2" fill="#e6e6e6"/><rect x="1352.5" y="154" width="3" height="13" fill="#484848" opacity="0"/><rect x="1341.5" y="195.5" width="15" height="11" fill="#555" stroke="#e6e6e6"/><rect x="1342" y="196" width="4" height="4.5" fill="#262626"/><rect x="1347" y="196" width="4" height="4.5" fill="#4a4a4a"/><rect x="1352" y="196" width="4" height="4.5" fill="#8a8a8a"/><rect x="1342" y="201.5" width="4" height="4.5" fill="#7a7a7a"/><rect x="1347" y="201.5" width="4" height="4.5" fill="#6a6a6a"/><rect x="1352" y="201.5" width="4" height="4.5" fill="#3a3a3a"/><path d="M1346.5 196V206M1351.5 196V206M1342 201H1356" stroke="#cfcfcf" stroke-width="1"/><rect x="1345.6" y="230.6" width="8" height="8.4" fill="url(#dg)"/><path d="M1348.6 230V222C1348.6 220.4 1350.6 220.4 1350.6 222V230Z" fill="#e6e6e6"/><path d="M1346.6 230L1342 222.6C1343.6 221.6 1346.6 224 1347.8 230Z" fill="#cfcfcf"/><path d="M1351.6 230C1351.6 226 1353.6 222.4 1357.8 223.4C1357 225.4 1354.6 226.6 1353 230Z" fill="#cfcfcf"/><path d="M1349 250C1351.4 250 1353 251.8 1353 253.8C1353 254.6 1352.8 255.2 1352.4 255.8C1354.8 255.2 1357 256.8 1357 259.2C1357 261.4 1355.2 262.8 1353.2 262.8C1351.8 262.8 1350.6 262.2 1349.8 261C1350 262.8 1350.8 263.8 1352.6 264.4V264.8H1345.4V264.4C1347.2 263.8 1348 262.8 1348.2 261C1347.4 262.2 1346.2 262.8 1344.8 262.8C1342.8 262.8 1341 261.4 1341 259.2C1341 256.8 1343.2 255.2 1345.6 255.8C1345.2 255.2 1345 254.6 1345 253.8C1345 251.8 1346.6 250 1349 250Z" fill="url(#dg)"/><rect x="1341" y="292" width="17" height="1" fill="#e6e6e6"/><rect x="1341" y="296" width="17" height="2" fill="#e6e6e6"/><rect x="1341" y="301" width="17" height="3" fill="#cfcfcf"/><rect x="1341.5" y="320.5" width="16" height="11" fill="url(#dh)" stroke="#e6e6e6"/><circle cx="1346.6" cy="352.4" r="6.4" fill="url(#dg)"/><circle cx="1351.6" cy="357.4" r="5.8" fill="#5e5e5e" fill-opacity="0.75" stroke="#e6e6e6" stroke-width="1.3"/><circle cx="1349.5" cy="395" r="8.2" stroke="#e6e6e6" stroke-width="1.2" stroke-dasharray="2.6 1.4"/><circle cx="1349.5" cy="395" r="5.8" fill="url(#dg)"/><path d="M1344.5 423V416.5H1357.5V429.5H1351" stroke="#e6e6e6" stroke-width="1.2"/><rect x="1341.5" y="423.5" width="5" height="5" stroke="#e6e6e6"/><rect x="1344.5" y="426.5" width="5" height="5" fill="#cfcfcf" fill-opacity="0.7" stroke="#cfcfcf"/><path d="M1349.5 456L1358.4 460.6L1349.5 465.2L1340.6 460.6Z" fill="#e6e6e6"/><path d="M1342.6 465.4L1340.6 466.6L1349.5 472.8L1358.4 466.6L1356.4 465.4L1349.5 469Z" fill="#cfcfcf"/><rect x="1340.5" y="483.5" width="10" height="13" fill="#484848" stroke="#e6e6e6" stroke-width="1.1"/><rect x="1344.5" y="490.5" width="13" height="10" fill="#484848" stroke="#e6e6e6" stroke-width="1.1"/></g></svg>
</div>
</body></html>
